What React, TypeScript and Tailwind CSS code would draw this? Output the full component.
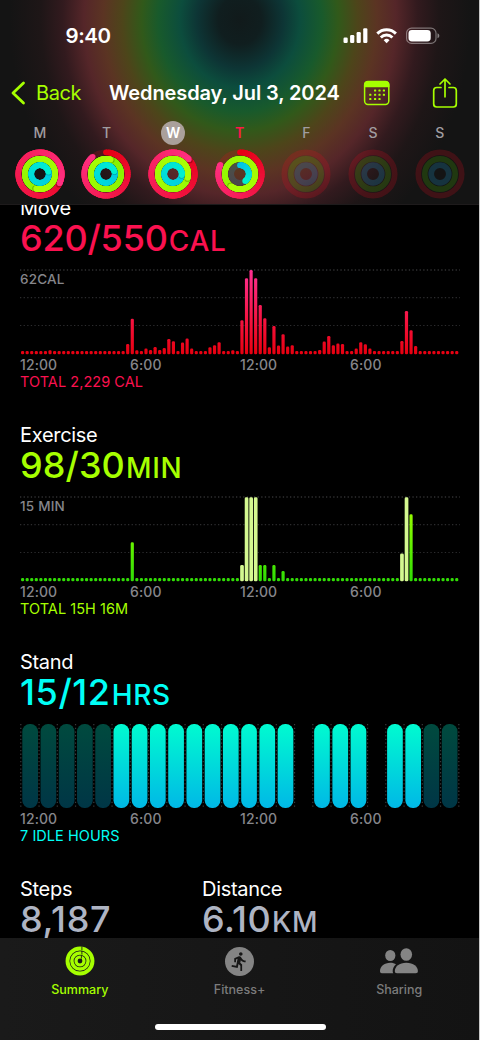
import React from 'react'
import { MdDirectionsRun } from 'react-icons/md'

type RGB = [number, number, number]

interface DayData {
  letter: string
  move: number
  exercise: number
  stand: number
  selected?: boolean
  today?: boolean
}

const days: DayData[] = [
  { letter: 'M', move: 1.32, exercise: 1.54, stand: 1.21 },
  { letter: 'T', move: 0.895, exercise: 1.05, stand: 1.2 },
  { letter: 'W', move: 1.13, exercise: 2.29, stand: 1.27, selected: true },
  { letter: 'T', move: 0.82, exercise: 1.6, stand: 0.4, today: true },
  { letter: 'F', move: 0, exercise: 0, stand: 0 },
  { letter: 'S', move: 0, exercise: 0, stand: 0 },
  { letter: 'S', move: 0, exercise: 0, stand: 0 },
]

// Quarter-hour samples, bar heights in chart pixels keyed by slot
const moveBars: Record<number, number> = {
  6: 4, 23: 10.3, 24: 35.6, 25: 4, 27: 5.7, 28: 4.3, 29: 7.3, 30: 4.3, 31: 6.3, 32: 15.3, 33: 13,
  35: 11.7, 36: 15.7, 37: 5.7, 41: 7, 42: 9, 43: 12, 46: 4, 48: 34, 49: 76, 50: 84.3, 51: 76,
  52: 49.3, 53: 36, 54: 7, 55: 28.3, 56: 8.7, 57: 20, 58: 7.7, 59: 9, 65: 4.3, 66: 12.7, 67: 18.3,
  68: 9, 69: 10.7, 70: 10.3, 73: 5.7, 74: 12, 75: 10, 76: 5.7, 83: 13.3, 84: 43.3, 85: 24, 86: 8.3,
}

const exerciseBars: Record<number, number> = {
  24: 39, 48: 16.3, 49: 84, 50: 84, 51: 84, 52: 16.3, 53: 16.3, 55: 16.3, 57: 10.3, 83: 27.7, 84: 84, 85: 67,
}

const workoutSlots = [48, 49, 50, 51, 83, 84]

const standHours = 'iiiiissssssssss.sss.ssii'

function mix(a: RGB, b: RGB, t: number) {
  const c = a.map((v, i) => Math.round(v + (b[i] - v) * t))
  return `rgb(${c[0]},${c[1]},${c[2]})`
}

function point(radius: number, turn: number) {
  const angle = turn * Math.PI * 2
  return [25 + radius * Math.sin(angle), 25 - radius * Math.cos(angle)]
}

function Ring({ radius, value, from, to, track }: { radius: number; value: number; from: RGB; to: RGB; track: string }) {
  const steps = 72
  const [ex, ey] = point(radius, value)
  const [sx, sy] = point(radius, value + 0.012)

  return (
    <g fill="none" strokeWidth={5.7}>
      <circle cx={25} cy={25} r={radius} stroke={track} />
      {value > 0 && (
        <>
          {value > 1 ? (
            <circle cx={25} cy={25} r={radius} stroke={mix(from, to, 0.5)} />
          ) : (
            <circle cx={25} cy={25 - radius} r={2.85} fill={mix(from, to, 0)} stroke="none" />
          )}
          {Array.from({ length: steps }, (_, i) => {
            const [x1, y1] = point(radius, (value * i) / steps)
            const [x2, y2] = point(radius, Math.min(value, (value * (i + 1)) / steps + 0.02))
            return (
              <path
                key={i}
                d={`M${x1} ${y1}A${radius} ${radius} 0 0 1 ${x2} ${y2}`}
                stroke={mix(from, to, i / steps)}
              />
            )
          })}
          {value > 1 && <circle cx={sx} cy={sy} r={2.85} fill="#000" fillOpacity={0.25} stroke="none" />}
          <circle cx={ex} cy={ey} r={2.85} fill={mix(from, to, 1)} stroke="none" />
        </>
      )}
    </g>
  )
}

function ActivityRings({ day }: { day: DayData }) {
  return (
    <svg width="50" height="50" viewBox="0 0 50 50">
      <Ring radius={21.7} value={day.move} from={[230, 0, 20]} to={[255, 48, 130]} track="rgba(235,10,30,0.2)" />
      <Ring radius={15.2} value={day.exercise} from={[130, 240, 0]} to={[172, 255, 5]} track="rgba(80,200,0,0.2)" />
      <Ring radius={8.8} value={day.stand} from={[0, 195, 230]} to={[0, 240, 208]} track="rgba(30,150,200,0.24)" />
    </svg>
  )
}

function DayColumn({ day }: { day: DayData }) {
  return (
    <div className="flex flex-1 flex-col items-center">
      <div
        className={`flex h-6 w-6 items-center justify-center rounded-full text-[14px] leading-none ${
          day.selected
            ? 'bg-[#aaa09b] font-semibold text-white'
            : day.today
              ? 'font-semibold text-[#ff1648]'
              : 'font-medium text-[#a09da0]'
        }`}
      >
        {day.letter}
      </div>
      <div className="mt-[4.5px]">
        <ActivityRings day={day} />
      </div>
    </div>
  )
}

function StatusBar() {
  return (
    <div className="flex h-[72px] items-center justify-between pl-[65.5px] pr-[39px]">
      <span className="text-[20.5px] font-semibold leading-none tracking-[-0.4px] text-white">9:40</span>
      <svg width="97" height="18" viewBox="0 0 97 18" fill="#fff">
        <rect x="0.5" y="10.5" width="4.2" height="5.5" rx="1.2" />
        <rect x="7.1" y="8" width="4.2" height="8" rx="1.2" />
        <rect x="13.6" y="5" width="4.2" height="11" rx="1.2" />
        <rect x="20.2" y="1.2" width="4.2" height="14.8" rx="1.2" />
        <g fill="none" stroke="#fff" strokeWidth="2.9">
          <path d="M34.3 6.6a13.2 13.2 0 0 1 18.6 0" />
          <path d="M37.8 10.4a8.2 8.2 0 0 1 11.6 0" />
        </g>
        <path d="M40.7 13.2a4.1 4.1 0 0 1 5.8 0l-2.9 3z" />
        <rect x="63.6" y="1.1" width="29.4" height="15.3" rx="5" fill="none" stroke="#fff" strokeOpacity="0.4" strokeWidth="1.2" />
        <rect x="65.5" y="3" width="22.2" height="11.4" rx="3.4" />
        <path d="M94.5 6.2v5c1.2-.5 1.8-1.5 1.8-2.5s-.6-2-1.8-2.5z" fillOpacity="0.45" />
      </svg>
    </div>
  )
}

function CalendarIcon() {
  const dots = [
    [12, 10.4], [16.4, 10.4], [20.8, 10.4],
    [7.2, 14.7], [12, 14.7], [16.4, 14.7], [20.8, 14.7],
    [7.2, 19], [12, 19], [16.4, 19],
  ]
  return (
    <svg width="28" height="26" viewBox="0 0 28 26" fill="#a6ff00">
      <rect x="1.6" y="1.6" width="24.2" height="22.8" rx="3.4" fill="none" stroke="#a6ff00" strokeWidth="1.5" />
      <path d="M1 7.2V4.6C1 2.4 2.4 1 4.6 1h18.2c2.2 0 3.6 1.4 3.6 3.6v2.6z" />
      {dots.map(([x, y]) => (
        <rect key={`${x}-${y}`} x={x - 1} y={y - 0.9} width="2.2" height="2" rx="0.6" />
      ))}
    </svg>
  )
}

function ShareIcon() {
  return (
    <svg
      width="26"
      height="32"
      viewBox="0 0 26 32"
      fill="none"
      stroke="#a6ff00"
      strokeWidth="1.7"
      strokeLinecap="round"
      strokeLinejoin="round"
    >
      <path d="M9 10.5H4.7C2.7 10.5 1.7 11.5 1.7 13.5V27C1.7 29 2.7 30 4.7 30H21.3C23.3 30 24.3 29 24.3 27V13.5C24.3 11.5 23.3 10.5 21.3 10.5H17" />
      <path d="M13 19.8V2.2M8 7L13 2L18 7" />
    </svg>
  )
}

function GridLines() {
  return (
    <g strokeWidth="1.2" strokeDasharray="1.3 2.3">
      <path d="M0 4H440" stroke="#48484a" />
      <path d="M0 31.7H440" stroke="#2c2c2e" />
      <path d="M0 59.5H440" stroke="#2c2c2e" />
    </g>
  )
}

function MoveChart() {
  return (
    <svg width="440" height="90" viewBox="0 0 440 90">
      <defs>
        <linearGradient id="move" gradientUnits="userSpaceOnUse" x1="0" y1="4" x2="0" y2="88">
          <stop offset="0" stopColor="#ff3092" />
          <stop offset="0.6" stopColor="#f5133f" />
          <stop offset="1" stopColor="#e80010" />
        </linearGradient>
      </defs>
      <GridLines />
      {Array.from({ length: 96 }, (_, i) => {
        const h = moveBars[i] ?? 3.3
        return <rect key={i} x={1 + i * 4.57} y={88.3 - h} width="3.2" height={h} rx="1.3" fill="url(#move)" />
      })}
    </svg>
  )
}

function ExerciseChart() {
  return (
    <svg width="440" height="90" viewBox="0 0 440 90">
      <defs>
        <linearGradient id="exercise" gradientUnits="userSpaceOnUse" x1="0" y1="4" x2="0" y2="88">
          <stop offset="0" stopColor="#b0ff00" />
          <stop offset="0.6" stopColor="#5ff000" />
          <stop offset="1" stopColor="#2fdc05" />
        </linearGradient>
      </defs>
      <GridLines />
      {Array.from({ length: 96 }, (_, i) => {
        const h = exerciseBars[i] ?? 3.3
        const workout = workoutSlots.includes(i)
        return (
          <rect
            key={i}
            x={(workout ? 0.8 : 1) + i * 4.57}
            y={88.3 - h}
            width={workout ? 3.7 : 3.2}
            height={h}
            rx="1.4"
            fill={workout ? '#d4f890' : 'url(#exercise)'}
          />
        )
      })}
    </svg>
  )
}

function StandChart() {
  return (
    <svg width="440" height="90" viewBox="0 0 440 90">
      <defs>
        <linearGradient id="stand" x1="0" y1="0" x2="0" y2="1">
          <stop offset="0" stopColor="#00fbd0" />
          <stop offset="1" stopColor="#00b8e6" />
        </linearGradient>
        <linearGradient id="idle" x1="0" y1="0" x2="0" y2="1">
          <stop offset="0" stopColor="#004a3e" />
          <stop offset="1" stopColor="#003646" />
        </linearGradient>
      </defs>
      {Array.from({ length: 25 }, (_, i) => (
        <path key={i} d={`M${0.8 + i * 18.25} 4V88`} stroke="#3a3a3c" strokeWidth="1.2" strokeDasharray="1.3 2.4" />
      ))}
      {standHours.split('').map((hour, i) =>
        hour === '.' ? null : (
          <rect
            key={i}
            x={2.3 + i * 18.24}
            y="4"
            width="15.7"
            height="84"
            rx="7.4"
            fill={hour === 's' ? 'url(#stand)' : 'url(#idle)'}
          />
        )
      )}
    </svg>
  )
}

interface HeadingProps {
  title: string
  value: string
  unit?: string
  tracking: string
}

interface MetricProps extends HeadingProps {
  color: string
  scale?: string
  total: string
  children: React.ReactNode
}

function Metric({ title, value, unit, tracking, color, scale, total, children }: MetricProps) {
  return (
    <section className={`h-[227px] ${color}`}>
      <MetricHeading title={title} value={value} unit={unit} tracking={tracking} />
      <div className="relative mt-[10px] h-[90px]">
        {children}
        {scale && (
          <span className="absolute left-0 top-[5px] text-[13.5px] font-medium leading-4 tracking-[0.2px] text-[#86868b]">
            {scale}
          </span>
        )}
      </div>
      <div className="mt-px grid h-4 grid-cols-4 text-[14px] font-medium leading-4 tracking-[0.1px] text-[#86868b]">
        <span>12:00</span>
        <span>6:00</span>
        <span>12:00</span>
        <span>6:00</span>
      </div>
      <p className="h-[18px] text-[14.5px] leading-[18px] tracking-[0.05px]">{total}</p>
    </section>
  )
}

function MetricHeading({ title, value, unit, tracking }: HeadingProps) {
  return (
    <>
      <h2 className="h-6 text-[20px] leading-6 tracking-[-0.3px] text-white">{title}</h2>
      <p className={`h-9 whitespace-nowrap text-[36px] font-medium leading-9 ${tracking}`}>
        {value}
        {unit && <span className="ml-px text-[28px] tracking-[0.7px]">{unit}</span>}
      </p>
    </>
  )
}

function SummaryIcon() {
  return (
    <svg width="30" height="30" viewBox="0 0 30 30" fill="none" stroke="#a6ff00">
      <circle cx="15" cy="15" r="12.5" strokeWidth="3.9" />
      <circle cx="15" cy="15" r="8.1" strokeWidth="3.5" />
      <circle cx="15" cy="15" r="4" strokeWidth="3.2" />
      <path d="M16.9 0.5V4.5M16.9 5V8.6M16.4 9.5V12.6" stroke="#1a1f10" strokeWidth="0.9" />
    </svg>
  )
}

function SharingIcon() {
  return (
    <svg width="40" height="30" viewBox="0 0 40 30" fill="#848484">
      <ellipse cx="11.3" cy="9.5" rx="5.1" ry="5.5" />
      <ellipse cx="27.3" cy="8.5" rx="5.8" ry="6.3" />
      <path d="M1 25.2C1 20.5 5 16.7 11.3 16.7C13.7 16.7 15.6 17.3 17 18.2C14.8 20.2 13.7 22.7 13.7 25C13.7 26 14 27 14.4 27.2H2.8C1.7 27.2 1 26.5 1 25.2Z" />
      <path d="M15.8 25C15.8 20.8 20.2 16.7 27.3 16.7C34.5 16.7 38.9 20.8 38.9 25C38.9 26.5 38.2 27.2 36.7 27.2H18C16.5 27.2 15.8 26.5 15.8 25Z" />
    </svg>
  )
}

function Tab({ label, active, children }: { label: string; active?: boolean; children: React.ReactNode }) {
  return (
    <button
      className={`flex flex-1 flex-col items-center pt-[8.4px] text-[12.5px] font-medium leading-4 tracking-[0px] ${
        active ? 'text-[#a6ff00]' : 'text-[#7c7c7c]'
      }`}
    >
      <span className="flex h-[30px] items-center justify-center">{children}</span>
      <span className="mt-[5.3px]">{label}</span>
    </button>
  )
}

export default function App() {
  return (
    <div className="flex h-[1040px] w-[480px] flex-col overflow-hidden border-r border-[#c8c8c8] bg-black font-['Inter',sans-serif]">
      <header className="h-[205px] shrink-0 border-b border-[#1e1b1c] bg-[radial-gradient(ellipse_240px_270px_at_240px_20px,#111a1b_0%,#101e1f_9%,#0d3535_18%,#0c4d3d_25%,#185a2c_34%,#31591a_41%,#4d451a_49%,#5b3423_57%,#552629_65%,#321a1e_74%,#1e1617_83%,#141414_96%)]">
        <StatusBar />
        <nav className="flex h-[42px] items-center pl-[11px]">
          <svg width="15" height="26" viewBox="0 0 15 26" fill="none" stroke="#a6ff00" strokeWidth="2.8" strokeLinecap="round" strokeLinejoin="round">
            <path d="M12.5 3L2 13L12.5 23" />
          </svg>
          <span className="ml-[10px] w-[73px] text-[20px] leading-none tracking-[-0.4px] text-[#a6ff00]">Back</span>
          <h1 className="w-[254px] whitespace-nowrap text-[20px] font-semibold leading-none tracking-[-0.1px] text-white">
            Wednesday, Jul 3, 2024
          </h1>
          <CalendarIcon />
          <div className="ml-[41px]">
            <ShareIcon />
          </div>
        </nav>
        <div className="flex pl-[6.5px] pr-[6px] pt-[6.5px]">
          {days.map((day, i) => (
            <DayColumn key={i} day={day} />
          ))}
        </div>
      </header>

      <main className="h-[733px] shrink-0 overflow-hidden pl-5">
        <div className="-mt-[9px] w-[440px]">
          <Metric
            title="Move"
            value="620/550"
            unit="CAL"
            tracking="tracking-[-0.2px]"
            color="text-[#fa114f]"
            scale="62CAL"
            total="TOTAL 2,229 CAL"
          >
            <MoveChart />
          </Metric>
          <Metric
            title="Exercise"
            value="98/30"
            unit="MIN"
            tracking="tracking-[0.1px]"
            color="text-[#a6ff00]"
            scale="15 MIN"
            total="TOTAL 15H 16M"
          >
            <ExerciseChart />
          </Metric>
          <Metric
            title="Stand"
            value="15/12"
            unit="HRS"
            tracking="tracking-[0.6px]"
            color="text-[#00fff6]"
            total="7 IDLE HOURS"
          >
            <StandChart />
          </Metric>
          <div className="flex text-[#aeb4c3]">
            <div className="w-[182px]">
              <MetricHeading title="Steps" value="8,187" tracking="tracking-[0.7px]" />
            </div>
            <div>
              <MetricHeading title="Distance" value="6.10" unit="KM" tracking="tracking-[0.4px]" />
            </div>
          </div>
        </div>
      </main>

      <footer className="flex h-[102px] shrink-0 flex-col items-center bg-linear-to-r from-[#1a1a1a] to-[#131313]">
        <div className="flex h-[86px] w-full">
          <Tab label="Summary" active>
            <SummaryIcon />
          </Tab>
          <Tab label="Fitness+">
            <span className="flex h-[29px] w-[29px] items-center justify-center rounded-full bg-[#848484] text-[#161616]">
              <MdDirectionsRun size={21} />
            </span>
          </Tab>
          <Tab label="Sharing">
            <SharingIcon />
          </Tab>
        </div>
        <div className="ml-px h-[6px] w-[171px] rounded-full bg-white" />
      </footer>
    </div>
  )
}
